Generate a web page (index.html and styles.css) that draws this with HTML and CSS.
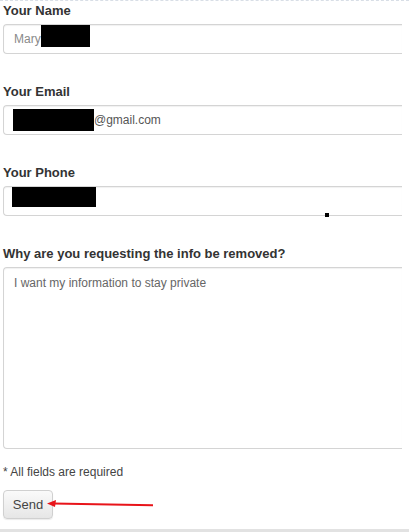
FILE: index.html
```html
<!DOCTYPE html>
<html>
<head>
<meta charset="utf-8">
<link rel="stylesheet" href="styles.css">
</head>
<body>
<div class="topline"></div>
<form class="form">
  <div class="group">
    <div class="label">Your Name</div>
    <div class="field"><span class="val light">Mary</span><span class="redact r-name"></span></div>
  </div>
  <div class="group">
    <div class="label">Your Email</div>
    <div class="field"><span class="redact r-email"></span><span class="val">@gmail.com</span></div>
  </div>
  <div class="group">
    <div class="label">Your Phone</div>
    <div class="field phone"><span class="redact r-phone"></span><span class="dot"></span></div>
  </div>
  <div class="group last">
    <div class="label">Why are you requesting the info be removed?</div>
    <div class="field area"><span class="val mid">I want my information to stay private</span></div>
  </div>
  <div class="note">* All fields are required</div>
  <div class="actions">
    <span class="btn">Send</span>
    <svg class="arrow" width="110" height="10" viewBox="0 0 110 10">
      <line x1="6" y1="4.6" x2="106" y2="6.2" stroke="#e8141a" stroke-width="2"/>
      <polygon points="0,4.5 9,1 8,8" fill="#e8141a"/>
    </svg>
  </div>
</form>
<div class="bottomline"></div>
</body>
</html>
```
FILE: styles.css
```css
html, body {
  margin: 0;
  padding: 0;
  background: #fff;
}
body {
  font-family: "Liberation Sans", Arial, sans-serif;
  font-size: 13px;
  color: #333;
  width: 409px;
  height: 532px;
  overflow: hidden;
  position: relative;
}
.topline {
  height: 0;
  border-top: 1px dashed #d8dee6;
}
.form {
  padding: 1px 0 0 3px;
}
.group {
  margin-bottom: 29px;
}
.group.last {
  margin-bottom: 0;
}
.label {
  font-weight: bold;
  font-size: 13px;
  line-height: 18px;
  margin-bottom: 4px;
  color: #333;
}
.field {
  position: relative;
  height: 30px;
  box-sizing: border-box;
  width: 399px;
  border: 1px solid #d4d4d4;
  border-right: none;
  border-radius: 4px 0 0 4px;
  box-shadow: inset 0 1px 1px rgba(0,0,0,0.06);
  padding: 0 0 0 10px;
  display: flex;
  align-items: center;
  font-size: 12px;
  color: #555;
}
.field.area {
  height: 182px;
  align-items: flex-start;
  padding-top: 8px;
}
.val.light { color: #8a8a8a; }
.val.mid { color: #666; }
.redact {
  display: inline-block;
  background: #000;
}
.r-name {
  width: 49px;
  height: 22px;
  margin-top: -7px;
}
.r-email {
  width: 81px;
  height: 22px;
  margin-left: -1px;
}
.r-phone {
  width: 84px;
  height: 20px;
  margin-left: -2px;
  margin-top: -8px;
}
.dot {
  position: absolute;
  left: 321px;
  top: 26px;
  width: 4px;
  height: 4px;
  background: #000;
}
.note {
  margin-top: 15px;
  font-size: 12px;
  line-height: 16px;
  color: #444;
}
.actions {
  position: relative;
  margin-top: 10px;
  height: 29px;
}
.btn {
  display: inline-flex;
  align-items: center;
  justify-content: center;
  box-sizing: border-box;
  width: 50px;
  height: 29px;
  border: 1px solid #d0d0d0;
  border-radius: 4px;
  background: linear-gradient(#fafafa, #e6e6e6);
  box-shadow: 0 1px 1px rgba(0,0,0,0.08);
  font-size: 13px;
  color: #444;
}
.arrow {
  position: absolute;
  left: 44px;
  top: 9px;
}
.bottomline {
  position: absolute;
  left: 0;
  right: 0;
  top: 529px;
  height: 3px;
  background: #e2e2e2;
}
```
